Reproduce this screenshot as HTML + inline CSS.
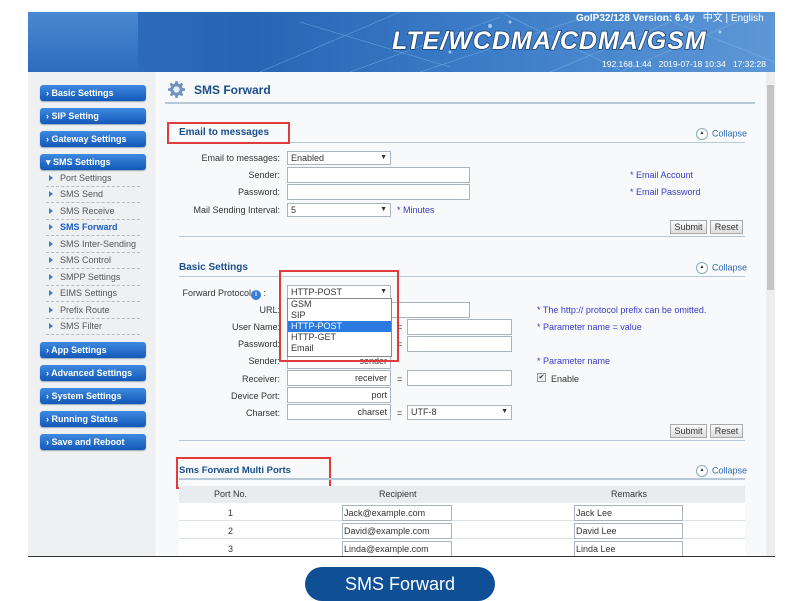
<!DOCTYPE html><html><head><meta charset="utf-8"><style>
*{margin:0;padding:0;box-sizing:border-box}
body{width:800px;height:601px;background:#fff;position:relative;overflow:hidden;font-family:"Liberation Sans","Noto Sans CJK SC",sans-serif;font-size:9px;color:#333}
.a{position:absolute}
.hdr{left:28px;top:12px;width:747px;height:60px;background:linear-gradient(90deg,#2f6fc0 0%,#2a64b4 30%,#3b7cc8 60%,#5d97d6 100%)}
.side{left:28px;top:72px;width:128px;height:485px;background:#eef0f2}
.btn{left:40px;width:106px;height:16px;border-radius:3px;background:linear-gradient(#3d8ae0,#1458b8);color:#fff;font-weight:bold;font-size:9px;line-height:16px;padding-left:6px;box-shadow:0 1px 1px #9ab}
.sub{left:46px;width:94px;height:16px;border-bottom:1px dashed #bbb;font-size:9px;color:#555;line-height:14px;padding-left:14px}
.sub:before{content:"";position:absolute;left:3px;top:4px;border-left:4px solid #3a7cc8;border-top:3px solid transparent;border-bottom:3px solid transparent}
.content{left:157px;top:72px;width:609px;height:485px;background:#f8f9fa}
.sec{color:#1a4f8a;font-weight:bold;font-size:10px}
.ln{height:2px;background:#b7c8d8}
.lbl{width:120px;text-align:right;font-size:9px;color:#333}
.in{background:#fff;border:1px solid #a9b4c0;height:16px;font-size:9px;line-height:14px;padding:0 3px}
.sel{background:#fff;border:1px solid #a9b4c0;height:14px;font-size:9px;line-height:12px;padding:0 3px}
.sel:after{content:"▼";position:absolute;right:3px;font-size:7px}
.note{color:#3a3ac8;font-size:9px}
.col{color:#2a6ab4;font-size:9px}
.col:before{content:"▲";display:inline-block;width:10px;height:10px;border-radius:50%;border:1px solid #8ab;background:#fff;color:#234;font-size:5px;line-height:9px;text-align:center;margin-right:4px;vertical-align:middle}
.b{height:14px;border:1px solid #aaa;background:linear-gradient(#fafafa,#ddd);font-size:9px;line-height:12px;text-align:center}
.red{border:2px solid #e03c3c}
.tr{left:179px;width:566px;height:18px;border-bottom:1px solid #dde2e8;background:#fff}
</style></head><body>
<div class="a hdr"></div>
<div class="a" style="left:28px;top:12px;width:110px;height:60px;background:linear-gradient(#4a88d2,#2d6cbd)"></div>
<svg class="a" style="left:200px;top:12px" width="575" height="60"><g stroke="#9fd0f5" stroke-width="0.6" opacity="0.5" fill="none"><path d="M60 60 L200 0 M150 60 L300 5 M220 60 L400 0 M350 60 L470 10 M420 60 L560 0 M100 10 L250 55 M300 0 L420 58 M460 5 L575 50"/></g><g fill="#cfe8ff" opacity="0.7"><circle cx="290" cy="14" r="2"/><circle cx="310" cy="10" r="1.5"/><circle cx="250" cy="40" r="1.5"/><circle cx="520" cy="20" r="1.5"/></g></svg>
<div class="a" style="left:576px;top:9px;width:199px;overflow:hidden;color:#fff;font-weight:bold;font-size:10px;white-space:nowrap">GoIP32/128 Version: 6.4y &nbsp;&nbsp;<span style="font-weight:normal">中文 | English</span></div>
<div class="a" style="left:392px;top:27px;color:#fff;font-style:italic;font-weight:bold;font-size:25px;letter-spacing:1px;-webkit-text-stroke:1.5px #1a3f70;paint-order:stroke fill;white-space:nowrap">LTE/WCDMA/CDMA/GSM</div>
<div class="a" style="left:602px;top:59px;color:#fff;font-size:8.5px;white-space:nowrap">192.168.1.44 &nbsp;&nbsp;2019-07-18 10:34 &nbsp;&nbsp;17:32:28</div>
<div class="a side"></div>
<div class="a btn" style="top:85px">› Basic Settings</div>
<div class="a btn" style="top:108px">› SIP Setting</div>
<div class="a btn" style="top:131px">› Gateway Settings</div>
<div class="a btn" style="top:154px">▾ SMS Settings</div>
<div class="a sub" style="top:171px">Port Settings</div>
<div class="a sub" style="top:187px">SMS Send</div>
<div class="a sub" style="top:204px">SMS Receive</div>
<div class="a sub" style="top:220px;color:#1a5cc0;font-weight:bold">SMS Forward</div>
<div class="a sub" style="top:237px">SMS Inter-Sending</div>
<div class="a sub" style="top:253px">SMS Control</div>
<div class="a sub" style="top:270px">SMPP Settings</div>
<div class="a sub" style="top:286px">EIMS Settings</div>
<div class="a sub" style="top:303px">Prefix Route</div>
<div class="a sub" style="top:319px">SMS Filter</div>
<div class="a btn" style="top:342px">› App Settings</div>
<div class="a btn" style="top:365px">› Advanced Settings</div>
<div class="a btn" style="top:388px">› System Settings</div>
<div class="a btn" style="top:411px">› Running Status</div>
<div class="a btn" style="top:434px">› Save and Reboot</div>
<div class="a content"></div>
<div class="a" style="left:766px;top:72px;width:9px;height:485px;background:#eee"></div>
<div class="a" style="left:767px;top:85px;width:7px;height:205px;background:#c4c4c4"></div>
<svg class="a" style="left:168px;top:81px" width="17" height="17" viewBox="0 0 16 16"><path fill="#6f93bd" d="M7 0h2l.4 2.2 1.6.7 1.9-1.3 1.4 1.4-1.3 1.9.7 1.6L16 7v2l-2.2.4-.7 1.6 1.3 1.9-1.4 1.4-1.9-1.3-1.6.7L9 16H7l-.4-2.2-1.6-.7-1.9 1.3-1.4-1.4 1.3-1.9-.7-1.6L0 9V7l2.2-.4.7-1.6-1.3-1.9 1.4-1.4 1.9 1.3 1.6-.7z"/><circle cx="8" cy="8" r="3" fill="#e8eef5"/></svg>
<div class="a" style="left:194px;top:83px;color:#1a4f8a;font-weight:bold;font-size:12px">SMS Forward</div>
<div class="a ln" style="left:165px;top:102px;width:590px"></div>
<div class="a red" style="left:167px;top:122px;width:123px;height:22px"></div>
<div class="a sec" style="left:179px;top:127px">Email to messages</div>
<div class="a col" style="left:696px;top:128px">Collapse</div>
<div class="a ln" style="left:290px;top:142px;width:455px;height:1px"></div>
<div class="a lbl" style="left:160px;top:153px">Email to messages:</div><div class="a sel" style="left:287px;top:151px;width:104px">Enabled</div>
<div class="a lbl" style="left:160px;top:170px">Sender:</div><div class="a in" style="left:287px;top:167px;width:183px"></div>
<div class="a lbl" style="left:160px;top:187px">Password:</div><div class="a in" style="left:287px;top:184px;width:183px"></div>
<div class="a lbl" style="left:160px;top:205px">Mail Sending Interval:</div><div class="a sel" style="left:287px;top:203px;width:104px">5</div>
<div class="a note" style="left:397px;top:205px">* Minutes</div>
<div class="a note" style="left:630px;top:170px">* Email Account</div>
<div class="a note" style="left:630px;top:187px">* Email Password</div>
<div class="a b" style="left:670px;top:220px;width:37px">Submit</div><div class="a b" style="left:710px;top:220px;width:33px">Reset</div>
<div class="a ln" style="left:179px;top:236px;width:566px;height:1px"></div>
<div class="a sec" style="left:179px;top:262px">Basic Settings</div>
<div class="a col" style="left:696px;top:262px">Collapse</div>
<div class="a ln" style="left:179px;top:276px;width:566px;height:1px"></div>
<div class="a lbl" style="left:146px;top:288px">Forward Protocol<span style="display:inline-block;width:10px;height:10px;border-radius:50%;background:#3a7cd8;color:#fff;font-size:7px;line-height:10px;text-align:center;font-weight:bold">i</span> :</div>
<div class="a sel" style="left:287px;top:285px;width:104px">HTTP-POST</div>
<div class="a lbl" style="left:160px;top:305px">URL:</div><div class="a in" style="left:287px;top:302px;width:183px"></div>
<div class="a lbl" style="left:160px;top:322px">User Name:</div><div class="a in" style="left:287px;top:319px;width:104px"></div><div class="a" style="left:397px;top:322px">=</div><div class="a in" style="left:407px;top:319px;width:105px"></div>
<div class="a lbl" style="left:160px;top:339px">Password:</div><div class="a in" style="left:287px;top:336px;width:104px"></div><div class="a" style="left:397px;top:339px">=</div><div class="a in" style="left:407px;top:336px;width:105px"></div>
<div class="a lbl" style="left:160px;top:356px">Sender:</div><div class="a in" style="left:287px;top:353px;width:104px;text-align:right">sender</div>
<div class="a lbl" style="left:160px;top:374px">Receiver:</div><div class="a in" style="left:287px;top:370px;width:104px;text-align:right">receiver</div><div class="a" style="left:397px;top:374px">=</div><div class="a in" style="left:407px;top:370px;width:105px"></div>
<div class="a lbl" style="left:160px;top:391px">Device Port:</div><div class="a in" style="left:287px;top:387px;width:104px;text-align:right">port</div>
<div class="a lbl" style="left:160px;top:408px">Charset:</div><div class="a in" style="left:287px;top:404px;width:104px;text-align:right">charset</div><div class="a" style="left:397px;top:408px">=</div><div class="a sel" style="left:407px;top:405px;width:105px;height:15px">UTF-8</div>
<div class="a note" style="left:537px;top:305px">* The http:// protocol prefix can be omitted.</div>
<div class="a note" style="left:537px;top:322px">* Parameter name = value</div>
<div class="a note" style="left:537px;top:356px">* Parameter name</div>
<div class="a" style="left:537px;top:373px;width:9px;height:9px;border:1px solid #999;background:#eee;font-size:7px;line-height:7px;text-align:center">✔</div><div class="a" style="left:551px;top:374px">Enable</div>
<div class="a" style="left:287px;top:298px;width:105px;height:59px;background:#fff;border:1px solid #888;font-size:9px;line-height:11px">
<div style="padding-left:3px">GSM</div><div style="padding-left:3px">SIP</div><div style="padding-left:3px;background:#2a7ae0;color:#fff">HTTP-POST</div><div style="padding-left:3px">HTTP-GET</div><div style="padding-left:3px">Email</div></div>
<div class="a red" style="left:279px;top:270px;width:120px;height:92px"></div>
<div class="a b" style="left:670px;top:424px;width:37px">Submit</div><div class="a b" style="left:710px;top:424px;width:33px">Reset</div>
<div class="a ln" style="left:179px;top:440px;width:566px;height:1px"></div>
<div class="a red" style="left:176px;top:457px;width:155px;height:32px"></div>
<div class="a sec" style="left:179px;top:465px;font-size:9.5px">Sms Forward Multi Ports</div>
<div class="a col" style="left:696px;top:465px">Collapse</div>
<div class="a ln" style="left:179px;top:478px;width:566px"></div>
<div class="a" style="left:179px;top:486px;width:566px;height:17px;background:#e9ecef;font-size:9px;line-height:17px"><span class="a" style="left:35px">Port No.</span><span class="a" style="left:200px">Recipient</span><span class="a" style="left:432px">Remarks</span></div>
<div class="a tr" style="top:503px"></div><div class="a tr" style="top:521px"></div><div class="a tr" style="top:539px"></div>
<div class="a" style="left:228px;top:508px">1</div><div class="a in" style="left:342px;top:505px;width:110px;padding:0 1px">Jack@example.com</div><div class="a in" style="left:574px;top:505px;width:109px;padding:0 1px">Jack Lee</div>
<div class="a" style="left:228px;top:526px">2</div><div class="a in" style="left:342px;top:523px;width:110px;padding:0 1px">David@example.com</div><div class="a in" style="left:574px;top:523px;width:109px;padding:0 1px">David Lee</div>
<div class="a" style="left:228px;top:544px">3</div><div class="a in" style="left:342px;top:541px;width:110px;padding:0 1px">Linda@example.com</div><div class="a in" style="left:574px;top:541px;width:109px;padding:0 1px">Linda Lee</div>
<div class="a" style="left:28px;top:556px;width:747px;height:1px;background:#333"></div>
<div class="a" style="left:305px;top:567px;width:190px;height:34px;border-radius:17px;background:#0f4f96;color:#fff;font-size:18px;line-height:34px;text-align:center">SMS Forward</div>
</body></html>
